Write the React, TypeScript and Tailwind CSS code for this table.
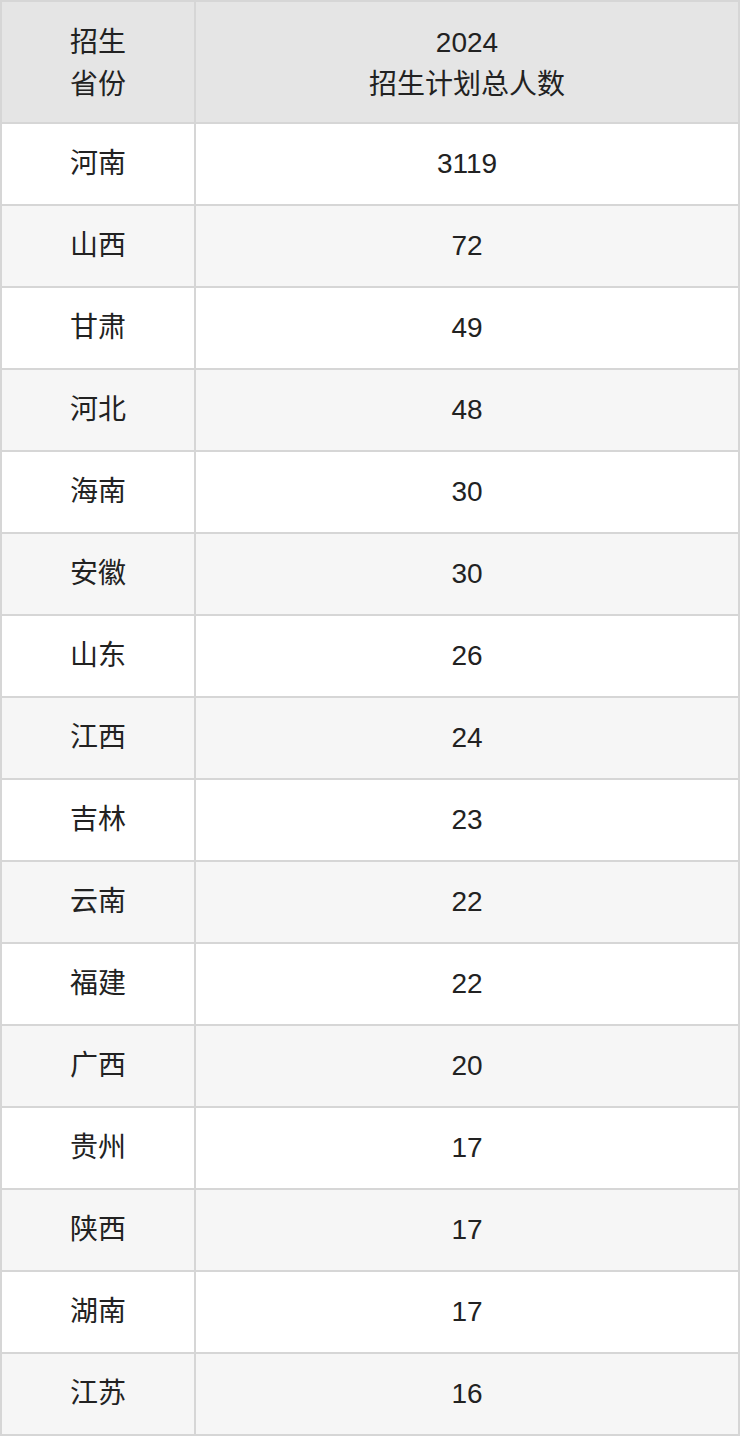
import React from "react";

const rows: [string, string][] = [
  ["河南", "3119"],
  ["山西", "72"],
  ["甘肃", "49"],
  ["河北", "48"],
  ["海南", "30"],
  ["安徽", "30"],
  ["山东", "26"],
  ["江西", "24"],
  ["吉林", "23"],
  ["云南", "22"],
  ["福建", "22"],
  ["广西", "20"],
  ["贵州", "17"],
  ["陕西", "17"],
  ["湖南", "17"],
  ["江苏", "16"],
];

export default function App() {
  return (
    <div
      className="w-[740px] bg-white text-[#222222] text-[28px] leading-[42px]"
      style={{ fontFamily: '"Liberation Sans", "Noto Sans CJK SC", sans-serif' }}
    >
      <table className="w-[740px] border-collapse table-fixed">
        <colgroup>
          <col className="w-[194px]" />
          <col />
        </colgroup>
        <thead>
          <tr className="bg-[#e5e5e5]">
            <th className="h-[122px] pt-[4px] border-2 border-[#d6d6d6] font-normal text-center align-middle">
              招生
              <br />
              省份
            </th>
            <th className="h-[122px] pt-[4px] border-2 border-[#d6d6d6] font-normal text-center align-middle">
              2024
              <br />
              招生计划总人数
            </th>
          </tr>
        </thead>
        <tbody>
          {rows.map(([p, n], i) => (
            <tr key={i} className={i % 2 === 1 ? "bg-[#f6f6f6]" : "bg-white"}>
              <td className="h-[82px] border-2 border-[#d6d6d6] text-center align-middle">{p}</td>
              <td className="h-[82px] border-2 border-[#d6d6d6] text-center align-middle">{n}</td>
            </tr>
          ))}
        </tbody>
      </table>
    </div>
  );
}
